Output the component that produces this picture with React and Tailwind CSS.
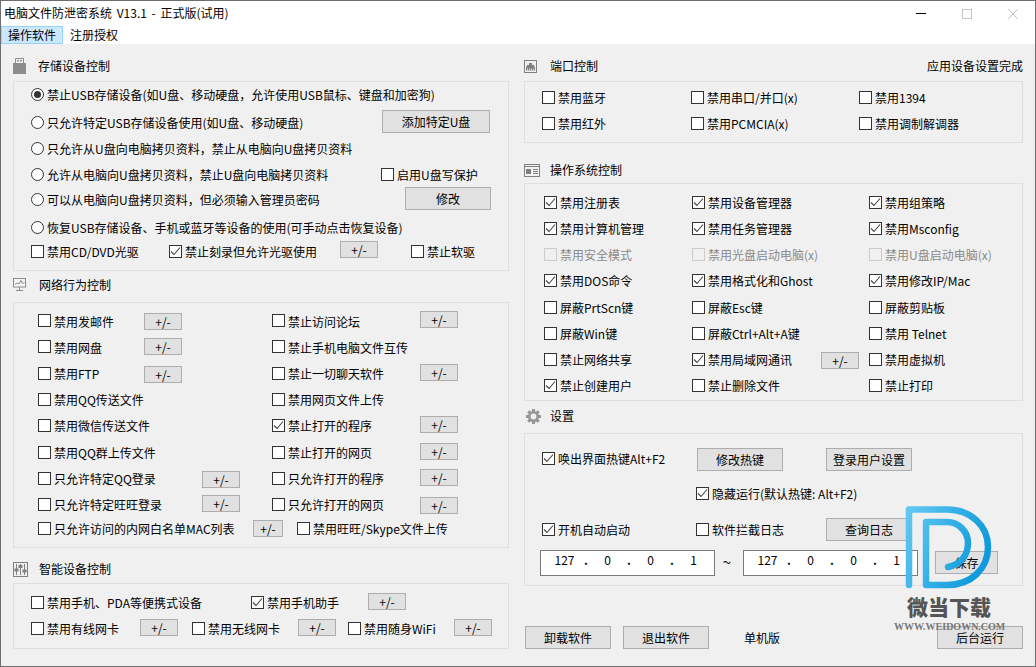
import React from 'react';

const Row = ({ className = '', children }) => (
  <div className={`flex h-[13px] items-start ${className}`}>{children}</div>
);

const Check = ({ label, checked, disabled, low, className = '' }) => (
  <label className={`flex shrink-0 items-start whitespace-nowrap ${disabled ? 'text-[#8a8a8a]' : ''} ${className}`}>
    <span className={`flex h-[13px] w-[13px] shrink-0 items-center justify-center border ${disabled ? 'border-[#cccccc] bg-[#f0f0f0]' : 'border-[#333333] bg-white'}`}>
      {checked && (
        <svg width="11" height="11" viewBox="0 0 11 11" fill="none" stroke="#444444" strokeWidth="1.1">
          <path d="M1 5.5 L4 8.5 L10 1.5" />
        </svg>
      )}
    </span>
    <span className={`ml-[3px] h-[16px] leading-[16px] ${low ? 'mt-0' : 'mt-[-1px]'}`}>{label}</span>
  </label>
);

const Radio = ({ label, checked, className = '' }) => (
  <label className={`flex shrink-0 items-start whitespace-nowrap ${className}`}>
    <span className="flex h-[13px] w-[13px] shrink-0 items-center justify-center rounded-full border border-[#333333] bg-white">
      {checked && <span className="h-[7px] w-[7px] rounded-full bg-[#333333]" />}
    </span>
    <span className="ml-[3px] mt-[-1px] h-[16px] leading-[16px]">{label}</span>
  </label>
);

const Btn = ({ children, w = 'w-[86px]', className = '' }) => (
  <button className={`flex h-[23px] shrink-0 items-center justify-center border border-[#adadad] bg-[#e1e1e1] leading-none text-black ${w} ${className}`}>
    {children}
  </button>
);

const Pm = ({ w = 'w-[38px]', className = '' }) => (
  <button className={`flex h-[17px] shrink-0 items-center justify-center border border-[#adadad] bg-[#e1e1e1] leading-none text-black ${w} ${className}`}>
    +/-
  </button>
);

const Heading = ({ icon, title, w = 'w-[26px]', className = '', children }) => (
  <div className={`flex h-[24px] items-center ${className}`}>
    <div className={`flex shrink-0 items-center ${w}`}>{icon}</div>
    <span className="leading-[16px]">{title}</span>
    {children}
  </div>
);

const Panel = ({ className = '', children }) => (
  <div className={`border border-[#dfdfdf] ${className}`}>{children}</div>
);

const IpBox = () => (
  <div className="flex h-[26px] w-[175px] shrink-0 items-start border border-[#7a7a7a] bg-white pl-[7px] pt-[1px] leading-[16px]">
    <span className="w-[33px] text-center">127</span>
    <span className="w-[10px] text-center font-bold">.</span>
    <span className="w-[33px] text-center">0</span>
    <span className="w-[10px] text-center font-bold">.</span>
    <span className="w-[33px] text-center">0</span>
    <span className="w-[10px] text-center font-bold">.</span>
    <span className="w-[33px] text-center">1</span>
  </div>
);

const UsbIcon = () => (
  <svg width="13" height="16" viewBox="0 0 13 16">
    <path d="M2.5 5.5 V0.5 H10.5 V5.5" fill="none" stroke="#8c8c8c" />
    <rect x="4" y="2" width="2" height="1.5" fill="#8c8c8c" />
    <rect x="7" y="2" width="2" height="1.5" fill="#8c8c8c" />
    <rect x="0" y="5" width="13" height="11" fill="#8c8c8c" />
  </svg>
);

const MonitorIcon = () => (
  <svg width="14" height="14" viewBox="0 0 14 14" fill="none" stroke="#8c8c8c">
    <rect x="0.5" y="0.5" width="12" height="8.5" fill="#f6f6f6" />
    <path d="M2 6.5 L4 5 L6 6 L8 2.5 L9.5 5.5 L11.5 4.5" />
    <path d="M6.5 9 V12.5 M3 12.5 H10" />
  </svg>
);

const SlidersIcon = () => (
  <svg width="15" height="15" viewBox="0 0 15 15" fill="none" stroke="#808080">
    <rect x="0.5" y="0.5" width="14" height="14" />
    <path d="M3.5 2 V13 M7.5 2 V13 M11.5 2 V13" />
    <rect x="2" y="7" width="3" height="2" fill="#808080" />
    <rect x="6" y="3.5" width="3" height="2" fill="#808080" />
    <rect x="10" y="8" width="3" height="2" fill="#808080" />
  </svg>
);

const PortIcon = () => (
  <svg width="13" height="13" viewBox="0 0 13 13">
    <rect x="0.5" y="0.5" width="12" height="12" fill="none" stroke="#808080" />
    <path d="M5 3 H8 V5 H10 V6.5 H11 V10.5 H2 V6.5 H3 V5 H5 Z" fill="#808080" />
    <path d="M3.5 8.5 V10.5 M5.5 8.5 V10.5 M7.5 8.5 V10.5 M9.5 8.5 V10.5" stroke="#f0f0f0" strokeWidth="0.8" />
  </svg>
);

const WindowIcon = () => (
  <svg width="16" height="13" viewBox="0 0 16 13" fill="none" stroke="#808080">
    <rect x="0.5" y="0.5" width="15" height="12" />
    <path d="M0.5 2.5 H15.5" />
    <rect x="2" y="5" width="5" height="5" fill="#808080" stroke="none" />
    <path d="M9 5.5 H14 M9 7.5 H14 M9 9.5 H14" />
  </svg>
);

const GearIcon = () => (
  <svg width="15" height="15" viewBox="0 0 15 15" fill="none" stroke="#969696" className="ml-[2px]">
    <circle cx="7.5" cy="7.5" r="4.2" strokeWidth="2.6" />
    <path d="M7.5 0 V3 M7.5 12 V15 M0 7.5 H3 M12 7.5 H15 M2.2 2.2 L4.3 4.3 M10.7 10.7 L12.8 12.8 M2.2 12.8 L4.3 10.7 M10.7 4.3 L12.8 2.2" strokeWidth="3" />
  </svg>
);

// 워터마크 로고
const Watermark = () => (
  <div className="absolute left-[885px] top-[500px] w-[125px]">
    <svg width="110" height="92" viewBox="885 500 110 92" fill="none">
      <defs>
        <linearGradient id="wd" x1="0" y1="0" x2="1" y2="0.4">
          <stop offset="0" stopColor="#62c8f2" />
          <stop offset="1" stopColor="#0f9bdc" />
        </linearGradient>
      </defs>
      <path
        d="M908 584 V508.5 H946 C970 508.5 987 525 987 546 C987 568 970 584 946 584 H925 V521 H946 C958 521 967 531 967 542 C967 556 958 564 947 566"
        stroke="url(#wd)"
        strokeWidth="6.5"
        strokeLinecap="round"
        strokeLinejoin="round"
      />
    </svg>
    <div className="ml-[21px] mt-[1px] whitespace-nowrap text-[21px] font-black leading-[24px] text-[#555555]">微当下载</div>
    <div className="ml-[8px] mt-[3px] whitespace-nowrap font-['Liberation_Serif',serif] text-[10px] font-bold leading-[12px] text-[#777777]">WWW.WEIDOWN.COM</div>
  </div>
);

export default function App() {
  return (
    <div className="relative flex h-[667px] w-[1036px] flex-col overflow-hidden border border-[#6e6e6e] bg-[#f0f0f0] font-['Noto_Sans_CJK_SC','Noto_Sans',sans-serif] text-[12px] text-black">
      <div className="flex h-[25px] shrink-0 items-center bg-white pl-[3px]">
        <span className="pb-[1px] leading-[16px] [word-spacing:2px]">电脑文件防泄密系统 V13.1 - 正式版(试用)</span>
        <div className="ml-auto flex">
          <div className="flex h-[25px] w-[46px] items-center justify-center">
            <span className="h-[1px] w-[10px] bg-black" />
          </div>
          <div className="flex h-[25px] w-[46px] items-center justify-center">
            <span className="h-[10px] w-[10px] border border-[#c4c4c4]" />
          </div>
          <div className="flex h-[25px] w-[45px] items-center justify-center">
            <svg width="10" height="10" viewBox="0 0 10 10" stroke="#c4c4c4"><path d="M0 0 L10 10 M10 0 L0 10" /></svg>
          </div>
        </div>
      </div>
      <div className="flex h-[18px] shrink-0 items-stretch bg-white">
        <div className="flex w-[62px] items-center justify-center border border-[#99d1ff] bg-[#cce8ff]">操作软件</div>
        <div className="ml-[7px] flex items-center">注册授权</div>
      </div>

      <div className="flex flex-1">
        {/* 왼쪽 */}
        <div className="ml-[12px] w-[496px] shrink-0">
          <Heading icon={<UsbIcon />} w="w-[25px]" title="存储设备控制" className="mt-[10px]" />
          <Panel className="mt-[3px] h-[190px] pl-[17px]">
            <Row className="mt-[6px]"><Radio checked label={'禁止USB存储设备(如U盘、移动硬盘\uFF0C允许使用USB鼠标、键盘和加密狗)'} /></Row>
            <Row className="mt-[15px]">
              <Radio className="w-[351px]" label="只允许特定USB存储设备使用(如U盘、移动硬盘)" />
              <Btn w="w-[108px]" className="mt-[-6px]">添加特定U盘</Btn>
            </Row>
            <Row className="mt-[13px]"><Radio label={'只允许从U盘向电脑拷贝资料\uFF0C禁止从电脑向U盘拷贝资料'} /></Row>
            <Row className="mt-[13px]">
              <Radio className="w-[350px]" label={'允许从电脑向U盘拷贝资料\uFF0C禁止U盘向电脑拷贝资料'} />
              <Check label="启用U盘写保护" />
            </Row>
            <Row className="mt-[12px]">
              <Radio className="w-[374px]" label={'可以从电脑向U盘拷贝资料\uFF0C但必须输入管理员密码'} />
              <Btn className="mt-[-6px]">修改</Btn>
            </Row>
            <Row className="mt-[15px]"><Radio label="恢复USB存储设备、手机或蓝牙等设备的使用(可手动点击恢复设备)" /></Row>
            <Row className="mt-[11px]">
              <Check className="w-[138px]" label="禁用CD/DVD光驱" />
              <Check checked className="w-[171px]" label="禁止刻录但允许光驱使用" />
              <Pm className="mt-[-4px]" />
              <Check className="ml-[33px]" label="禁止软驱" />
            </Row>
          </Panel>

          <Heading icon={<MonitorIcon />} title="网络行为控制" className="mt-[2px]" />
          <Panel className="mt-[5px] h-[246px] pl-[24px]">
            <Row className="mt-[11px]">
              <Check low className="w-[106px]" label="禁用发邮件" />
              <Pm className="mt-[-1px]" />
              <Check low className="ml-[90px] w-[148px]" label="禁止访问论坛" />
              <Pm className="mt-[-3px]" />
            </Row>
            <Row className="mt-[13px]">
              <Check low className="w-[106px]" label="禁用网盘" />
              <Pm className="mt-[-2px]" />
              <Check low className="ml-[90px]" label="禁止手机电脑文件互传" />
            </Row>
            <Row className="mt-[14px]">
              <Check className="w-[106px]" label="禁用FTP" />
              <Pm className="mt-[-1px]" />
              <Check className="ml-[90px] w-[148px]" label="禁止一切聊天软件" />
              <Pm className="mt-[-3px]" />
            </Row>
            <Row className="mt-[13px]">
              <Check className="w-[234px]" label="禁用QQ传送文件" />
              <Check label="禁用网页文件上传" />
            </Row>
            <Row className="mt-[13px]">
              <Check className="w-[234px]" label="禁用微信传送文件" />
              <Check checked className="w-[148px]" label="禁止打开的程序" />
              <Pm className="mt-[-3px]" />
            </Row>
            <Row className="mt-[14px]">
              <Check className="w-[234px]" label="禁用QQ群上传文件" />
              <Check className="w-[148px]" label="禁止打开的网页" />
              <Pm className="mt-[-3px]" />
            </Row>
            <Row className="mt-[13px]">
              <Check className="w-[164px]" label="只允许特定QQ登录" />
              <Pm className="mt-[-1px]" />
              <Check className="ml-[32px] w-[148px]" label="只允许打开的程序" />
              <Pm className="mt-[-3px]" />
            </Row>
            <Row className="mt-[13px]">
              <Check className="w-[164px]" label="只允许特定旺旺登录" />
              <Pm className="mt-[-3px]" />
              <Check className="ml-[32px] w-[148px]" label="只允许打开的网页" />
              <Pm className="mt-[-1px]" />
            </Row>
            <Row className="mt-[11px]">
              <Check className="w-[215px]" label="只允许访问的内网白名单MAC列表" />
              <Pm w="w-[30px]" className="mt-[-2px]" />
              <Check className="ml-[14px]" label="禁用旺旺/Skype文件上传" />
            </Row>
          </Panel>

          <Heading icon={<SlidersIcon />} title="智能设备控制" className="mt-[9px]" />
          <Panel className="mt-[2px] h-[66px] pl-[17px]">
            <Row className="mt-[12px]">
              <Check className="w-[220px]" label="禁用手机、PDA等便携式设备" />
              <Check checked className="w-[117px]" label="禁用手机助手" />
              <Pm className="mt-[-3px]" />
            </Row>
            <Row className="mt-[13px]">
              <Check className="w-[109px]" label="禁用有线网卡" />
              <Pm className="mt-[-3px]" />
              <Check className="ml-[14px] w-[106px]" label="禁用无线网卡" />
              <Pm className="mt-[-3px]" />
              <Check className="ml-[12px] w-[106px]" label="禁用随身WiFi" />
              <Pm className="mt-[-3px]" />
            </Row>
          </Panel>
        </div>

        {/* 오른쪽 */}
        <div className="ml-[15px] w-[499px] shrink-0">
          <Heading icon={<PortIcon />} title="端口控制" className="mt-[10px]">
            <span className="ml-auto leading-[16px]">应用设备设置完成</span>
          </Heading>
          <Panel className="mt-[3px] h-[62px] pl-[17px]">
            <Row className="mt-[9px]">
              <Check className="w-[149px]" label="禁用蓝牙" />
              <Check className="w-[168px]" label="禁用串口/并口(x)" />
              <Check label="禁用1394" />
            </Row>
            <Row className="mt-[13px]">
              <Check className="w-[149px]" label="禁用红外" />
              <Check className="w-[168px]" label="禁用PCMCIA(x)" />
              <Check label="禁用调制解调器" />
            </Row>
          </Panel>

          <Heading icon={<WindowIcon />} title="操作系统控制" className="mt-[15px]" />
          <Panel className="mt-[1px] h-[218px] pl-[19px]">
            <Row className="mt-[12px]">
              <Check checked className="w-[148px]" label="禁用注册表" />
              <Check checked className="w-[177px]" label="禁用设备管理器" />
              <Check checked label="禁用组策略" />
            </Row>
            <Row className="mt-[13px]">
              <Check checked className="w-[148px]" label="禁用计算机管理" />
              <Check checked className="w-[177px]" label="禁用任务管理器" />
              <Check checked label="禁用Msconfig" />
            </Row>
            <Row className="mt-[13px]">
              <Check disabled className="w-[148px]" label="禁用安全模式" />
              <Check disabled className="w-[177px]" label="禁用光盘启动电脑(x)" />
              <Check disabled label="禁用U盘启动电脑(x)" />
            </Row>
            <Row className="mt-[13px]">
              <Check checked className="w-[148px]" label="禁用DOS命令" />
              <Check checked className="w-[177px]" label="禁用格式化和Ghost" />
              <Check checked label="禁用修改IP/Mac" />
            </Row>
            <Row className="mt-[14px]">
              <Check className="w-[148px]" label="屏蔽PrtScn键" />
              <Check className="w-[177px]" label="屏蔽Esc键" />
              <Check label="屏蔽剪贴板" />
            </Row>
            <Row className="mt-[13px]">
              <Check className="w-[148px]" label="屏蔽Win键" />
              <Check className="w-[177px]" label="屏蔽Ctrl+Alt+A键" />
              <Check label="禁用 Telnet" />
            </Row>
            <Row className="mt-[13px]">
              <Check className="w-[148px]" label="禁止网络共享" />
              <Check checked className="w-[129px]" label="禁用局域网通讯" />
              <Pm className="mt-[-1px]" />
              <Check className="ml-[10px]" label="禁用虚拟机" />
            </Row>
            <Row className="mt-[13px]">
              <Check checked className="w-[148px]" label="禁止创建用户" />
              <Check className="w-[177px]" label="禁止删除文件" />
              <Check label="禁止打印" />
            </Row>
          </Panel>

          <Heading icon={<GearIcon />} title="设置" className="mt-[3px]" />
          <Panel className="mt-[5px] h-[153px] pl-[17px]">
            <Row className="mt-[18px]">
              <Check checked className="w-[155px]" label="唤出界面热键Alt+F2" />
              <Btn className="mt-[-4px]">修改热键</Btn>
              <Btn className="ml-[43px] mt-[-4px]">登录用户设置</Btn>
            </Row>
            <Row className="mt-[22px] pl-[154px]">
              <Check checked label="隐藏运行(默认热键: Alt+F2)" />
            </Row>
            <Row className="mt-[23px]">
              <Check checked className="w-[154px]" label="开机自动启动" />
              <Check className="w-[130px]" label="软件拦截日志" />
              <Btn className="mt-[-5px]">查询日志</Btn>
            </Row>
            <div className="ml-[-2px] mt-[14px] flex items-start">
              <IpBox />
              <span className="w-[28px] pr-[4px] pt-[4px] text-center text-[15px] leading-[16px]">~</span>
              <IpBox />
              <Btn w="w-[63px]" className="ml-[17px] mt-[1px]">保存</Btn>
            </div>
          </Panel>

          <div className="ml-[1px] mt-[40px] flex items-center">
            <Btn>卸载软件</Btn>
            <Btn className="ml-[12px]">退出软件</Btn>
            <span className="ml-[35px] leading-[16px]">单机版</span>
            <Btn className="ml-auto">后台运行</Btn>
          </div>
        </div>
      </div>
      <Watermark />
    </div>
  );
}
